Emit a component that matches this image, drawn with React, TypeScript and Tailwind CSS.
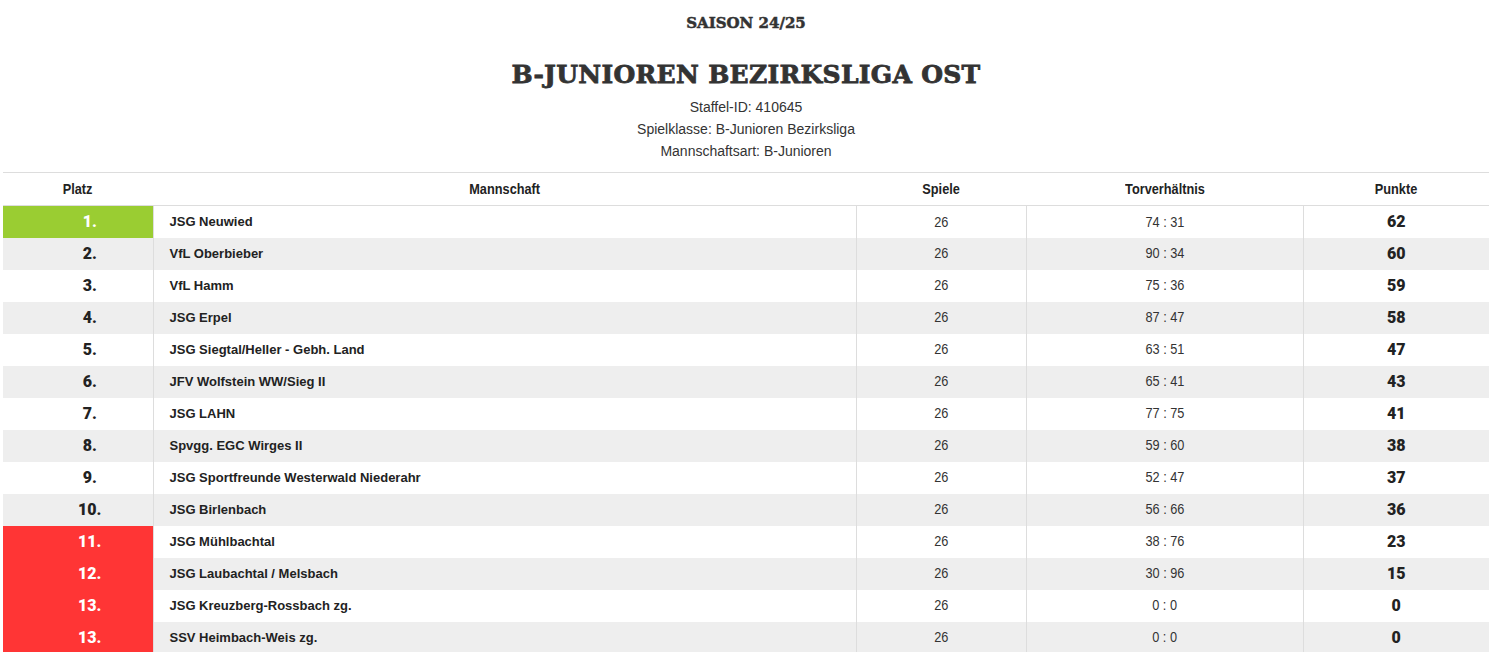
const rows = [
  { platz: '1.', team: 'JSG Neuwied', spiele: 26, tore: '74 : 31', punkte: 62, tone: 'up' },
  { platz: '2.', team: 'VfL Oberbieber', spiele: 26, tore: '90 : 34', punkte: 60 },
  { platz: '3.', team: 'VfL Hamm', spiele: 26, tore: '75 : 36', punkte: 59 },
  { platz: '4.', team: 'JSG Erpel', spiele: 26, tore: '87 : 47', punkte: 58 },
  { platz: '5.', team: 'JSG Siegtal/Heller - Gebh. Land', spiele: 26, tore: '63 : 51', punkte: 47 },
  { platz: '6.', team: 'JFV Wolfstein WW/Sieg II', spiele: 26, tore: '65 : 41', punkte: 43 },
  { platz: '7.', team: 'JSG LAHN', spiele: 26, tore: '77 : 75', punkte: 41 },
  { platz: '8.', team: 'Spvgg. EGC Wirges II', spiele: 26, tore: '59 : 60', punkte: 38 },
  { platz: '9.', team: 'JSG Sportfreunde Westerwald Niederahr', spiele: 26, tore: '52 : 47', punkte: 37 },
  { platz: '10.', team: 'JSG Birlenbach', spiele: 26, tore: '56 : 66', punkte: 36 },
  { platz: '11.', team: 'JSG Mühlbachtal', spiele: 26, tore: '38 : 76', punkte: 23, tone: 'down' },
  { platz: '12.', team: 'JSG Laubachtal / Melsbach', spiele: 26, tore: '30 : 96', punkte: 15, tone: 'down' },
  { platz: '13.', team: 'JSG Kreuzberg-Rossbach zg.', spiele: 26, tore: '0 : 0', punkte: 0, tone: 'down' },
  { platz: '13.', team: 'SSV Heimbach-Weis zg.', spiele: 26, tore: '0 : 0', punkte: 0, tone: 'down' },
];

const display = "font-['Roboto','DejaVu_Sans',sans-serif] font-black";

// schmale Schrift nachgebildet: Liberation Sans horizontal gestaucht
function Narrow({ children }: { children: React.ReactNode }) {
  return <span className="inline-block scale-x-[0.85] whitespace-nowrap">{children}</span>;
}

export default function App() {
  return (
    <div className="bg-white text-[#333] font-['Liberation_Sans',Arial,sans-serif] px-[3px] pt-[13px]">
      {/* Kopfbereich */}
      <div className="text-center">
        <h3 className="font-['DejaVu_Serif',serif] font-bold text-[15px] leading-[20px] [-webkit-text-stroke:0.5px_#333]">
          SAISON 24/25
        </h3>
        <h1 className="font-['DejaVu_Serif',serif] font-bold text-[25px] leading-[34px] tracking-[0.3px] mt-[25px] [-webkit-text-stroke:0.8px_#333]">
          B-JUNIOREN BEZIRKSLIGA OST
        </h1>
        <div className="text-[14px] leading-[22px] mt-[4px]">
          <p>Staffel-ID: 410645</p>
          <p>Spielklasse: B-Junioren Bezirksliga</p>
          <p>Mannschaftsart: B-Junioren</p>
        </div>
      </div>

      {/* Tabelle */}
      <table className="w-full border-collapse mt-[10px] text-[13px]">
        <thead>
          <tr className="border-y border-[#ddd] h-[33px] text-[15px] text-[#222]">
            <th className="w-[150px] font-bold"><Narrow>Platz</Narrow></th>
            <th className="font-bold"><Narrow>Mannschaft</Narrow></th>
            <th className="w-[170px] font-bold"><Narrow>Spiele</Narrow></th>
            <th className="w-[277px] font-bold"><Narrow>Torverhältnis</Narrow></th>
            <th className="w-[186px] font-bold"><Narrow>Punkte</Narrow></th>
          </tr>
        </thead>
        <tbody>
          {rows.map((r, i) => (
            <tr key={i} className={`h-[32px] ${i % 2 === 1 ? 'bg-[#eee]' : 'bg-white'}`}>
              <td
                className={`text-center pl-6 text-[16px] ${display} ${
                  r.tone === 'up'
                    ? 'bg-[#9acd32] text-white'
                    : r.tone === 'down'
                    ? 'bg-[#ff3535] text-white'
                    : 'text-[#222]'
                }`}
              >
                {r.platz}
              </td>
              <td className="border-l border-[#ddd] pl-4 font-bold text-[#222]">{r.team}</td>
              <td className="border-l border-[#ddd] text-center text-[15px]"><Narrow>{r.spiele}</Narrow></td>
              <td className="border-l border-[#ddd] text-center text-[15px]"><Narrow>{r.tore}</Narrow></td>
              <td className={`border-l border-[#ddd] text-center text-[16px] text-[#222] ${display}`}>{r.punkte}</td>
            </tr>
          ))}
        </tbody>
      </table>
    </div>
  );
}
